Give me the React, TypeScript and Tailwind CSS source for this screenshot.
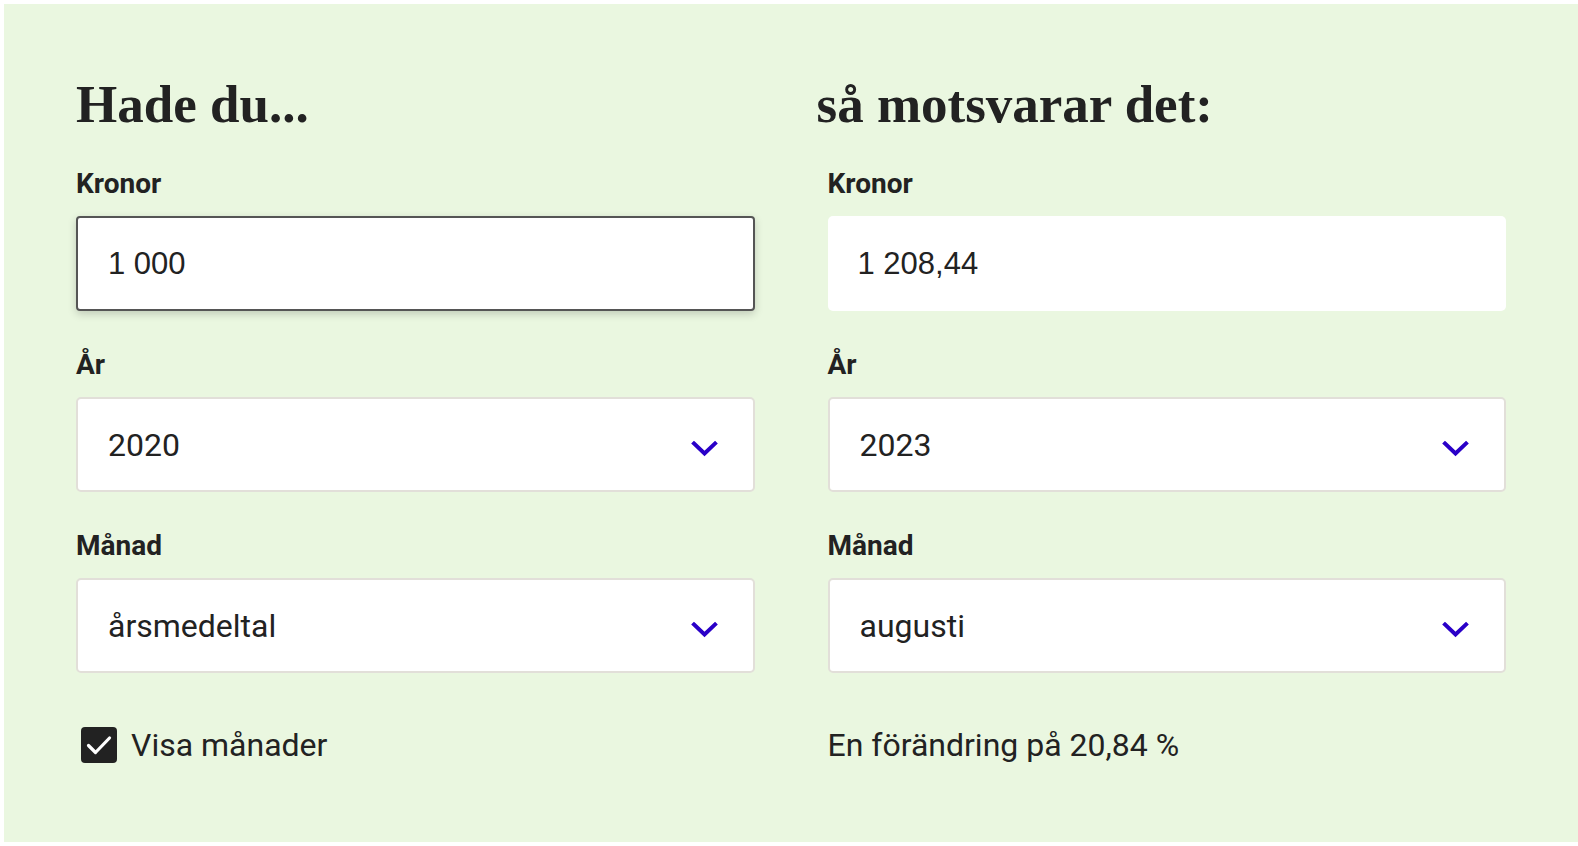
import { useState } from "react";

const years = ["2018", "2019", "2020", "2021", "2022", "2023"];
const months = ["årsmedeltal", "januari", "februari", "mars", "april", "maj", "juni", "juli", "augusti", "september", "oktober", "november", "december"];

function Chevron() {
  return (
    <svg className="pointer-events-none absolute right-[37px] top-[calc(50%+4px)] -translate-y-1/2" width="27" height="17" viewBox="0 0 27 17" fill="none">
      <path d="M3 3 L13.5 13 L24 3" stroke="#2a00c8" strokeWidth="4" strokeLinecap="square" />
    </svg>
  );
}

function Field({ label, children }: { label: string; children: React.ReactNode }) {
  return (
    <label className="flex flex-col">
      <span className="mb-4 h-8 font-['Roboto',sans-serif] text-[28px] font-bold leading-8 text-[#222]">{label}</span>
      {children}
    </label>
  );
}

function Select({ value, options, onChange }: { value: string; options: string[]; onChange: (v: string) => void }) {
  return (
    <div className="relative">
      <select
        className="h-[95px] w-full appearance-none rounded-[5px] border-2 border-[#e2dfd9] bg-white pl-[30px] font-['Roboto',sans-serif] text-[32px] text-[#222] outline-none"
        value={value}
        onChange={(e) => onChange(e.target.value)}
      >
        {options.map((o) => <option key={o} value={o}>{o}</option>)}
      </select>
      <Chevron />
    </div>
  );
}

export default function App() {
  const [amount, setAmount] = useState("1 000");
  const [fromYear, setFromYear] = useState("2020");
  const [toYear, setToYear] = useState("2023");
  const [fromMonth, setFromMonth] = useState("årsmedeltal");
  const [toMonth, setToMonth] = useState("augusti");
  const [showMonths, setShowMonths] = useState(true);

  return (
    <main className="min-h-screen bg-white pl-1 pt-1">
      <section className="h-[838px] bg-[#eaf7e0] pl-[72px] pr-[72px] pt-[74px] text-[#222]">
        <div className="grid grid-cols-2 gap-x-[73px]">
          <div className="flex flex-col">
            <h2 className="mb-[38px] font-['Liberation_Serif',serif] text-[53px] font-bold leading-[52px]">Hade du...</h2>
            <div className="flex flex-col gap-[38px]">
              <Field label="Kronor">
                <input
                  className="h-[95px] w-full rounded-[4px] border-2 border-[#555] bg-white pl-[30px] font-['Liberation_Sans',sans-serif] text-[31px] text-[#222] shadow-[0_3px_8px_rgba(0,0,0,0.18)] outline-none"
                  value={amount}
                  onChange={(e) => setAmount(e.target.value)}
                />
              </Field>
              <Field label="År">
                <Select value={fromYear} options={years} onChange={setFromYear} />
              </Field>
              <Field label="Månad">
                <Select value={fromMonth} options={months} onChange={setFromMonth} />
              </Field>
            </div>
            <label className="mt-[54px] flex h-9 items-center gap-[14px] pl-[5px] font-['Roboto',sans-serif] text-[32px]">
              <button
                type="button"
                onClick={() => setShowMonths(!showMonths)}
                className="flex h-9 w-9 items-center justify-center rounded-[4px] bg-[#222]"
              >
                {showMonths && (
                  <svg width="36" height="36" viewBox="0 0 36 36" fill="none">
                    <path d="M7.5 18.5 L14.5 25.5 L28.5 11" stroke="#fff" strokeWidth="3.2" strokeLinecap="round" strokeLinejoin="round" />
                  </svg>
                )}
              </button>
              Visa månader
            </label>
          </div>

          <div className="flex flex-col">
            <h2 className="-ml-[11px] mb-[38px] font-['Liberation_Serif',serif] text-[53px] font-bold leading-[52px]">så motsvarar det:</h2>
            <div className="flex flex-col gap-[38px]">
              <Field label="Kronor">
                <input
                  readOnly
                  className="h-[95px] w-full rounded-[5px] bg-white pl-[30px] font-['Liberation_Sans',sans-serif] text-[31px] text-[#222] outline-none"
                  value="1 208,44"
                />
              </Field>
              <Field label="År">
                <Select value={toYear} options={years} onChange={setToYear} />
              </Field>
              <Field label="Månad">
                <Select value={toMonth} options={months} onChange={setToMonth} />
              </Field>
            </div>
            <p className="mt-[54px] flex h-9 items-center font-['Roboto',sans-serif] text-[32px]">En förändring på 20,84 %</p>
          </div>
        </div>
      </section>
    </main>
  );
}
